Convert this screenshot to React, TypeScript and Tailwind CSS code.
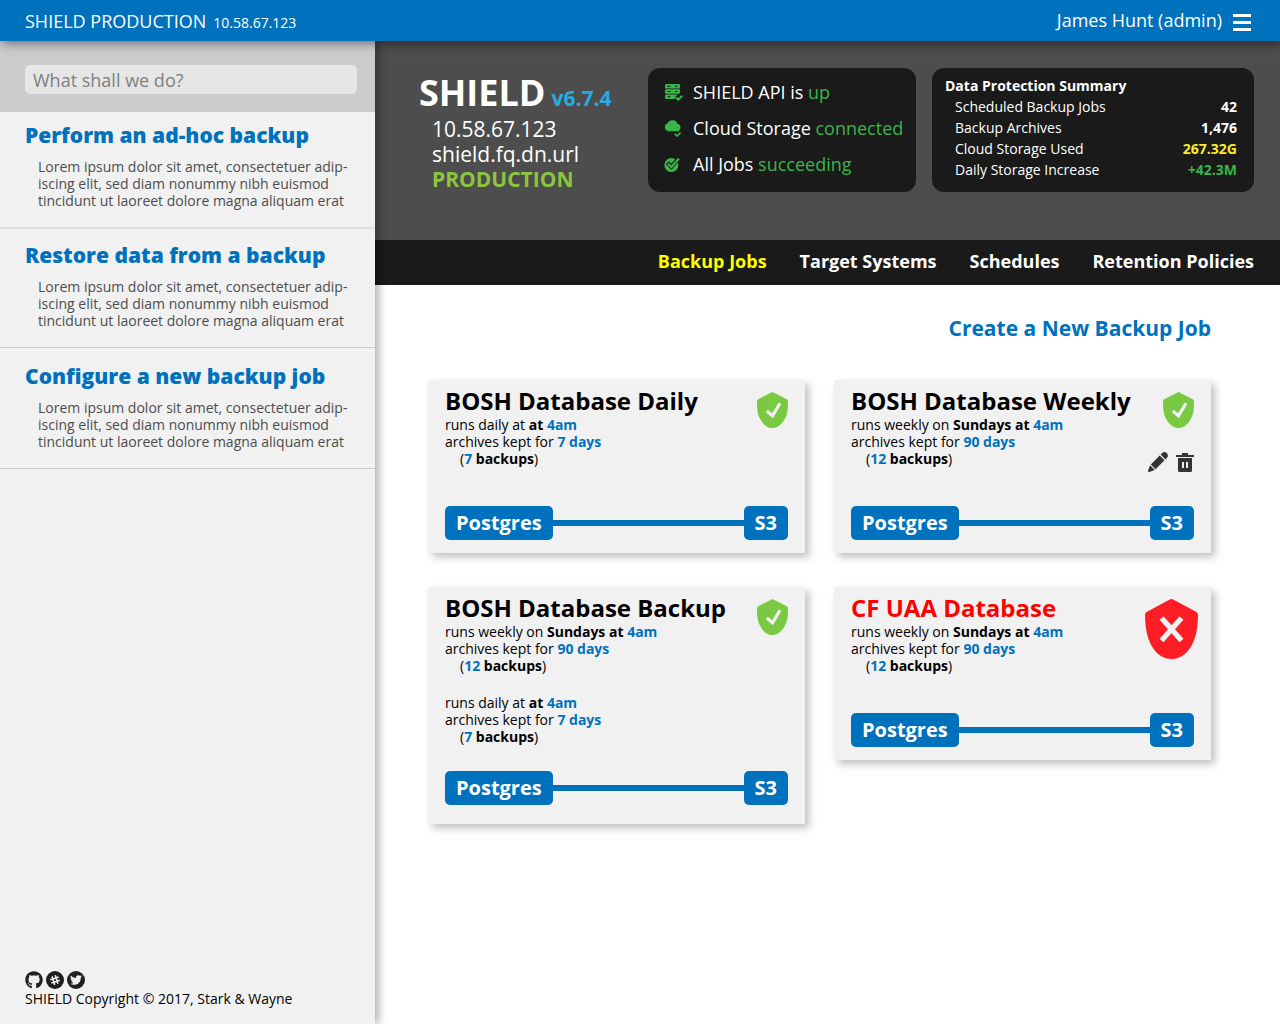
import React from "react";
import { FaGithub, FaTwitter } from "react-icons/fa";

type Schedule = {
  runs: string;
  when: string;
  time: string;
  keep: string;
  count: string;
};

type Job = {
  name: string;
  ok: boolean;
  editable?: boolean;
  schedules: Schedule[];
};

const daily: Schedule = { runs: "runs daily at", when: "at", time: "4am", keep: "7 days", count: "7" };
const weekly: Schedule = { runs: "runs weekly on", when: "Sundays at", time: "4am", keep: "90 days", count: "12" };

const jobs: Job[] = [
  { name: "BOSH Database Daily", ok: true, schedules: [daily] },
  { name: "BOSH Database Weekly", ok: true, editable: true, schedules: [weekly] },
  { name: "BOSH Database Backup", ok: true, schedules: [weekly, daily] },
  { name: "CF UAA Database", ok: false, schedules: [weekly] },
];

const tasks = [
  "Perform an ad-hoc backup",
  "Restore data from a backup",
  "Configure a new backup job",
];

function OkShield() {
  return (
    <svg className="h-9 w-[31px]" viewBox="0 0 31 36" role="img" aria-label="Healthy">
      <path
        d="M15.5 0 L29.8 7.3 Q31 8 31 9.4 C31 17 30.5 21.5 28.3 26 C25.6 31.6 21.5 36 15.5 36 C9.5 36 5.4 31.6 2.7 26 C.5 21.5 0 17 0 9.4 Q0 8 1.2 7.3 Z"
        fill="#7ac943"
      />
      <path d="M9.8 19 L15.5 23.8 L23 11.2" fill="none" stroke="#f1f1f1" strokeWidth="3.2" />
    </svg>
  );
}

function FailShield() {
  return (
    <svg className="h-15 w-[53px]" viewBox="0 0 53 60" role="img" aria-label="Failing">
      <path
        d="M24.8 .5 Q26.5 -.3 28.2 .5 L51.5 13 Q53 14 53 16 C52.8 27 51.5 35.5 48.5 42.5 C44 53 36.5 60 26.5 60 C16.5 60 9 53 4.5 42.5 C1.5 35.5 .2 27 0 16 Q0 14 1.5 13 Z"
        fill="#ff1d25"
      />
      <path d="M16.5 19 L36.5 41.5 M36.5 19 L16.5 41.5" stroke="#f1f1f1" strokeWidth="5.2" />
    </svg>
  );
}

function PencilIcon() {
  return (
    <svg className="h-5 w-5" viewBox="0 0 20 20" fill="#333333" aria-hidden="true">
      <path d="M12.6 2.6 L14.2 1 C15.6 -.3 17.4 -.2 18.7 1.1 C20.1 2.5 20.4 4.3 19 5.7 L17.4 7.4 Z" />
      <path d="M11.7 3.5 L16.5 8.3 L7.6 17.2 L2.8 12.4 Z" />
      <path d="M2 13.2 L6.8 18 L1.3 20 Q0 20.2 0 18.8 Z" />
    </svg>
  );
}

function TrashIcon() {
  return (
    <svg className="h-[19px] w-[18px]" viewBox="0 0 18 19" fill="#333333" aria-hidden="true">
      <path d="M0 2 H6 V0 H12 V2 H18 V4 H0 Z" />
      <path
        fillRule="evenodd"
        d="M2 5 H16 V17.5 Q16 19 14.5 19 H3.5 Q2 19 2 17.5 Z M6 9 V15 H8 V9 Z M10 9 V15 H12 V9 Z"
      />
    </svg>
  );
}

function ServerIcon() {
  return (
    <svg className="h-[18px] w-[19px] shrink-0" viewBox="0 0 19 18" aria-hidden="true">
      <rect x="1" y="1" width="15" height="4.6" rx="1.2" fill="#39b54a" />
      <rect x="1" y="6.2" width="15" height="4.6" rx="1.2" fill="#39b54a" />
      <path d="M2.2 11.4 H14 L11.5 13.5 L10.5 16 H2.2 Q1 16 1 14.8 V12.6 Q1 11.4 2.2 11.4 Z" fill="#39b54a" />
      <path d="M3.5 3.3 H6.5 M3.5 8.5 H6.5 M3.5 13.7 H6.5 M11 3.3 H13.5 M11 8.5 H13.5" stroke="#1a1a1a" strokeWidth="1" />
      <path d="M11.8 14.4 L14.4 16.6 L18.2 12.8" fill="none" stroke="#39b54a" strokeWidth="2" />
    </svg>
  );
}

function CloudIcon() {
  return (
    <svg className="h-[18px] w-[19px] shrink-0" viewBox="0 0 19 18" aria-hidden="true">
      <path
        d="M4.5 12.3 A4.2 4.2 0 0 1 3.6 4.2 A5.4 5.4 0 0 1 13.6 5 A3.7 3.7 0 0 1 11.8 12.3 Z"
        fill="#39b54a"
      />
      <path d="M10.8 15 L13 17 L16.6 13.6" fill="none" stroke="#39b54a" strokeWidth="1.7" />
    </svg>
  );
}

function JobsIcon() {
  return (
    <svg className="h-[18px] w-[19px] shrink-0" viewBox="0 0 19 18" aria-hidden="true">
      <circle cx="7.4" cy="10" r="7" fill="#39b54a" />
      <path d="M3.4 7.8 L7.4 11.8 L16.2 1.8" fill="none" stroke="#1a1a1a" strokeWidth="4.2" />
      <path d="M4 8.6 L7.4 12 L15 3.4" fill="none" stroke="#39b54a" strokeWidth="2.2" />
    </svg>
  );
}

function SlackIcon() {
  return (
    <svg className="h-[18px] w-[18px]" viewBox="0 0 18 18" aria-hidden="true">
      <circle cx="9" cy="9" r="9" fill="#231f20" />
      <g transform="rotate(-18 9 9)" stroke="#f1f1f1" strokeWidth="1.6" strokeLinecap="round">
        <path d="M7.3 5.2 V12.8 M10.7 5.2 V12.8 M5.2 7.3 H12.8 M5.2 10.7 H12.8" />
      </g>
    </svg>
  );
}

function StatusRow({ icon, label, state }: { icon: React.ReactNode; label: string; state: string }) {
  return (
    <li className="flex h-9 items-center gap-2.5 whitespace-nowrap text-[18px] text-white">
      {icon}
      <span>
        {label} <span className="text-[#39b54a]">{state}</span>
      </span>
    </li>
  );
}

function JobCard({ job }: { job: Job }) {
  const double = job.schedules.length > 1;
  return (
    <article
      className={`relative bg-[#f1f1f1] px-[17px] pt-[5px] text-[14px] leading-[17px] shadow-[4px_4px_8px_rgba(0,0,0,0.25)] ${
        double ? "pb-[19px]" : "pb-[13px]"
      }`}
    >
      <h2 className={`text-[24px] leading-[31px] font-bold ${job.ok ? "text-black" : "text-[#ff0000]"}`}>{job.name}</h2>
      <div className="flex flex-col gap-5">
        {job.schedules.map((s) => (
          <div key={s.runs}>
            <p>
              {s.runs} <b>{s.when} <span className="text-[#0071bc]">{s.time}</span></b>
            </p>
            <p>
              archives kept for <b className="text-[#0071bc]">{s.keep}</b>
            </p>
            <p className="pl-[15px]">
              (<b><span className="text-[#0071bc]">{s.count}</span> backups</b>)
            </p>
          </div>
        ))}
      </div>
      <div className={`flex items-center text-[20px] font-bold text-white ${double ? "mt-[26px]" : "mt-[39px]"}`}>
        <a href="#postgres" className="rounded-[5px] bg-[#0071bc] px-[11px] leading-[34px]">Postgres</a>
        <div className="h-1.5 flex-1 bg-[#0071bc]" />
        <a href="#s3" className="rounded-[5px] bg-[#0071bc] px-[11px] leading-[34px]">S3</a>
      </div>
      <div className={`absolute top-3 ${job.ok ? "right-[17px]" : "right-[13px]"}`}>
        {job.ok ? <OkShield /> : <FailShield />}
      </div>
      {job.editable && (
        <div className="absolute top-[72px] right-[17px] flex items-end gap-2">
          <button type="button" aria-label="Edit job"><PencilIcon /></button>
          <button type="button" aria-label="Delete job"><TrashIcon /></button>
        </div>
      )}
    </article>
  );
}

export default function App() {
  return (
    <div className="flex min-h-screen flex-col bg-white font-['Open_Sans',sans-serif] text-black">
      <header className="relative z-20 flex h-[41px] items-center justify-between bg-[#0071bc] pr-[29px] pl-[25px] text-white shadow-[2px_2px_10px_rgba(0,0,0,0.5)]">
        <div className="flex items-baseline gap-[7px] pt-0.5 text-[18px]">
          <span>SHIELD PRODUCTION</span>
          <span className="text-[14px]">10.58.67.123</span>
        </div>
        <div className="flex items-center gap-[11px] text-[18px]">
          <span>James Hunt (admin)</span>
          <button type="button" aria-label="Menu" className="flex w-[18px] flex-col gap-1 pt-[3px]">
            <span className="h-[3px] bg-white" />
            <span className="h-[3px] bg-white" />
            <span className="h-[3px] bg-white" />
          </button>
        </div>
      </header>

      <div className="flex flex-1">
        <aside className="relative z-10 flex w-[375px] shrink-0 flex-col bg-[#f1f1f1] shadow-[4px_0_8px_rgba(0,0,0,0.3)]">
          <div className="bg-[#cccccc] pt-6 pr-[18px] pb-[18px] pl-[25px]">
            <input
              type="text"
              aria-label="What shall we do?"
              placeholder="What shall we do?"
              className="block h-[29px] w-full rounded-[5px] bg-[#e6e6e6] px-2 text-[18px] placeholder:text-[#808080]"
            />
          </div>
          <nav aria-label="Tasks">
            {tasks.map((t) => (
              <a
                key={t}
                href="#task"
                className="block border-b border-[#cccccc] pt-[11px] pr-6 pb-[18px] pl-[25px] first:border-b-2 first:border-[#e0e0e0] first:pt-2 last:pt-[13px]"
              >
                <h2 className="text-[21px] leading-[30px] font-extrabold text-[#0071bc]">{t}</h2>
                <p className="mt-2 pl-[13px] text-[14px] leading-[17px] whitespace-nowrap text-[#4d4d4d]">
                  Lorem ipsum dolor sit amet, consectetuer adip-
                  <br />
                  iscing elit, sed diam nonummy nibh euismod
                  <br />
                  tincidunt ut laoreet dolore magna aliquam erat
                </p>
              </a>
            ))}
          </nav>
          <footer className="mt-auto px-[25px] pb-4 text-[14px]">
            <div className="flex gap-[3px]">
              <a href="#github" aria-label="GitHub"><FaGithub size={18} color="#231f20" /></a>
              <a href="#slack" aria-label="Slack"><SlackIcon /></a>
              <a
                href="#twitter"
                aria-label="Twitter"
                className="flex h-[18px] w-[18px] items-center justify-center rounded-full bg-[#231f20]"
              >
                <FaTwitter size={12} color="#f1f1f1" />
              </a>
            </div>
            <p className="leading-[19px]">SHIELD Copyright © 2017, Stark &amp; Wayne</p>
          </footer>
        </aside>

        <main className="min-w-0 flex-1">
          <section className="flex items-start justify-end gap-4 bg-[#4d4d4d] pt-[27px] pr-[26px] pb-12 pl-11 text-white">
            <div className="mr-auto pt-1.5 whitespace-nowrap">
              <h1 className="flex items-baseline gap-1.5 text-[36px] leading-[37px] font-bold">
                SHIELD <span className="text-[21px] text-[#29abe2]">v6.7.4</span>
              </h1>
              <div className="pl-[13px] text-[21px] leading-[25px]">
                <p>10.58.67.123</p>
                <p>shield.fq.dn.url</p>
                <p className="font-bold text-[#8cc63f]">PRODUCTION</p>
              </div>
            </div>
            <ul className="h-31 w-[268px] shrink-0 rounded-xl bg-[#1a1a1a] px-4 pt-1.5">
              <StatusRow icon={<ServerIcon />} label="SHIELD API is" state="up" />
              <StatusRow icon={<CloudIcon />} label="Cloud Storage" state="connected" />
              <StatusRow icon={<JobsIcon />} label="All Jobs" state="succeeding" />
            </ul>
            <div className="h-31 w-[322px] shrink-0 rounded-xl bg-[#1a1a1a] pt-2 pr-[17px] pl-[13px] text-[14px] leading-[21px]">
              <table className="w-full">
                <caption className="text-left leading-5 font-bold">Data Protection Summary</caption>
                <tbody>
                  <tr>
                    <th scope="row" className="pl-2.5 text-left font-normal">Scheduled Backup Jobs</th>
                    <td className="text-right font-bold">42</td>
                  </tr>
                  <tr>
                    <th scope="row" className="pl-2.5 text-left font-normal">Backup Archives</th>
                    <td className="text-right font-bold">1,476</td>
                  </tr>
                  <tr>
                    <th scope="row" className="pl-2.5 text-left font-normal">Cloud Storage Used</th>
                    <td className="text-right font-bold text-[#fcee21]">267.32G</td>
                  </tr>
                  <tr>
                    <th scope="row" className="pl-2.5 text-left font-normal">Daily Storage Increase</th>
                    <td className="text-right font-bold text-[#39b54a]">+42.3M</td>
                  </tr>
                </tbody>
              </table>
            </div>
          </section>

          <nav
            aria-label="Sections"
            className="flex h-[45px] items-center justify-end gap-[33px] bg-[#1a1a1a] pr-[26px] pb-0.5 text-[18px] font-bold text-white"
          >
            <a href="#jobs" aria-current="page" className="text-[#ffff00]">Backup Jobs</a>
            <a href="#targets">Target Systems</a>
            <a href="#schedules">Schedules</a>
            <a href="#retention">Retention Policies</a>
          </nav>

          <div className="pt-7 pr-[69px] pb-10 pl-[53px]">
            <div className="flex justify-end">
              <a href="#new" className="text-[21px] leading-[30px] font-bold text-[#0071bc]">Create a New Backup Job</a>
            </div>
            <div className="mt-[37px] grid grid-cols-2 items-start gap-x-[29px] gap-y-[34px]">
              {jobs.map((job) => (
                <JobCard key={job.name} job={job} />
              ))}
            </div>
          </div>
        </main>
      </div>
    </div>
  );
}
